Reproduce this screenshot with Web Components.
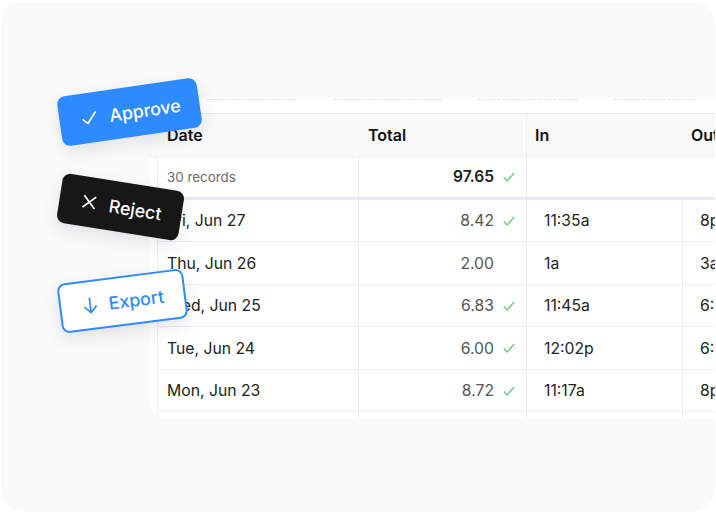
<!DOCTYPE html>
<html lang="en">
<head>
<meta charset="utf-8">
<title>Timesheet</title>
<style>
html, body { margin: 0; height: 100%; overflow: hidden; background: #fff; font-family: Inter, "Liberation Sans", sans-serif; }
</style>
</head>
<body>
<time-panel>
  <action-button slot="actions" variant="approve" icon="check" style="left:57.8px;top:85.8px;width:141.4px;transform:rotate(-8.2deg)">Approve</action-button>
  <action-button slot="actions" variant="reject" icon="cross" style="left:58px;top:180.5px;width:123px;transform:rotate(9deg)">Reject</action-button>
  <action-button slot="actions" variant="export" icon="down" style="left:57.6px;top:275px;width:126.8px;transform:rotate(-7.3deg)">Export</action-button>
  <time-row date="Fri, Jun 27" total="8.42" ok in="11:35a" out="8p"></time-row>
  <time-row date="Thu, Jun 26" total="2.00" in="1a" out="3a"></time-row>
  <time-row date="Wed, Jun 25" total="6.83" ok in="11:45a" out="6:30p"></time-row>
  <time-row date="Tue, Jun 24" total="6.00" ok in="12:02p" out="6:02p"></time-row>
  <time-row date="Mon, Jun 23" total="8.72" ok in="11:17a" out="8p"></time-row>
  <time-row date="" total="" in="" out=""></time-row>
</time-panel>

<script>
const ICONS = {
  check: '<path d="M3 10.5 7.8 15.5 17 4.5"/>',
  cross: '<path d="M4 4l12 12M16 4 4 16"/>',
  down: '<path d="M10 2.5v15M3.8 11.3l6.2 6.2 6.2-6.2"/>'
};

class ActionButton extends HTMLElement {
  constructor() {
    super();
    this.attachShadow({ mode: 'open' });
  }

  connectedCallback() {
    const icon = ICONS[this.getAttribute('icon')];
    this.shadowRoot.innerHTML = `
      <style>
        :host {
          position: absolute;
          box-sizing: border-box;
          height: 50px;
          display: flex;
          align-items: center;
          gap: 10px;
          padding-left: 20px;
          border-radius: 8px;
          font: 500 17.8px Inter, "Liberation Sans", sans-serif;
          box-shadow: 0 6px 16px rgba(40, 50, 70, 0.12);
        }
        :host([variant="approve"]) { background: #2e8bff; color: #fff; }
        :host([variant="reject"]) { background: #171717; color: #fff; }
        :host([variant="export"]) { background: #fff; color: #2e8bff; border: 2px solid #2e8bff; padding-left: 18.5px; gap: 9px; }
        svg { width: 20px; height: 20px; fill: none; stroke: currentColor; stroke-width: 1.7; flex: none; }
      </style>
      <svg viewBox="0 0 20 20">${icon}</svg><slot></slot>`;
  }
}
customElements.define('action-button', ActionButton);

class TimeRow extends HTMLElement {
  constructor() {
    super();
    this.attachShadow({ mode: 'open' });
  }

  connectedCallback() {
    const check = this.hasAttribute('ok')
      ? '<svg viewBox="0 0 12 12"><path d="M.8 6.5 4.2 10 11.2 2"/></svg>'
      : '<span class="none"></span>';
    this.shadowRoot.innerHTML = `
      <style>
        :host {
          display: grid;
          grid-template-columns: var(--cols);
          box-sizing: border-box;
          height: 42.5px;
          border-bottom: 1px solid #eceef3;
          font-size: 15.75px;
          color: #222;
        }
        div { display: flex; align-items: center; box-sizing: border-box; padding-top: 1px; border-left: 1px solid #eceef3; white-space: nowrap; }
        .date { padding-left: 9px; }
        .total { justify-content: flex-end; padding-right: 11px; gap: 9px; color: #555; }
        .in, .out { padding-left: 17px; }
        svg, .none { width: 12px; height: 12px; flex: none; }
        svg { fill: none; stroke: #63cb7a; stroke-width: 1.3; }
      </style>
      <div class="date">${this.getAttribute('date')}</div>
      <div class="total">${this.getAttribute('total')}${check}</div>
      <div class="in">${this.getAttribute('in')}</div>
      <div class="out">${this.getAttribute('out')}</div>`;
  }
}
customElements.define('time-row', TimeRow);

class TimePanel extends HTMLElement {
  constructor() {
    super();
    this.attachShadow({ mode: 'open' });
    this.shadowRoot.innerHTML = `
      <style>
        :host {
          --cols: 201px 168px 156px 200px;
          display: block;
          position: relative;
          box-sizing: border-box;
          margin: 1px;
          height: 511px;
          padding: 97px 0 0 148px;
          background: #fafafa;
          border-radius: 24px;
          overflow: hidden;
          font-family: Inter, "Liberation Sans", sans-serif;
        }
        .card { background: #fff; height: 320px; border-bottom-left-radius: 18px; padding-left: 8px; box-sizing: border-box; overflow: hidden; }
        .tabs { display: flex; height: 15px; margin-left: -8px; }
        .tabs i { display: block; height: 0; margin-top: 1px; border-top: 1px dashed #e0e0e0; }
        .head, .sum { display: grid; grid-template-columns: var(--cols); box-sizing: border-box; }
        .head {
          height: 44px;
          margin-left: -8px;
          padding-left: 8px;
          background: #f9f9f9;
          border-top: 1px solid #ebebeb;
          border-bottom: 1px solid #eef0f4;
          font-size: 16px;
          font-weight: 600;
          color: #111;
        }
        .head span { display: flex; align-items: center; padding-left: 10px; }
        .head .in { border-left: 1px solid #eef0f4; padding-left: 8px; }
        .head .out { padding-left: 9px; }
        .sum { height: 42.5px; border-bottom: 3px solid #e6eaf1; }
        .sum span { display: flex; align-items: center; box-sizing: border-box; border-left: 1px solid #eceef3; }
        .records { padding-left: 9px; font-size: 13.4px; color: #6b6b6b; }
        .sum .total { justify-content: flex-end; gap: 9px; padding-right: 11px; font-size: 15.6px; font-weight: 600; color: #222; }
        .sum .blank { border-left: 1px solid #eceef3; }
        .sum .end { border-left: 0; }
        .total svg { width: 12px; height: 12px; fill: none; stroke: #63cb7a; stroke-width: 1.3; }
      </style>
      <div class="card">
        <div class="tabs">
          <i style="margin-left:58px;width:88px"></i>
          <i style="margin-left:38px;width:108px"></i>
          <i style="margin-left:36px;width:100px"></i>
          <i style="margin-left:36px;width:82px"></i>
        </div>
        <div class="head">
          <span>Date</span><span>Total</span><span class="in">In</span><span class="out">Out</span>
        </div>
        <div class="sum">
          <span class="records">30 records</span>
          <span class="total">97.65<svg viewBox="0 0 12 12"><path d="M.8 6.5 4.2 10 11.2 2"/></svg></span>
          <span class="blank"></span><span class="end"></span>
        </div>
        <slot></slot>
      </div>
      <slot name="actions"></slot>`;
  }
}
customElements.define('time-panel', TimePanel);
</script>
</body>
</html>
